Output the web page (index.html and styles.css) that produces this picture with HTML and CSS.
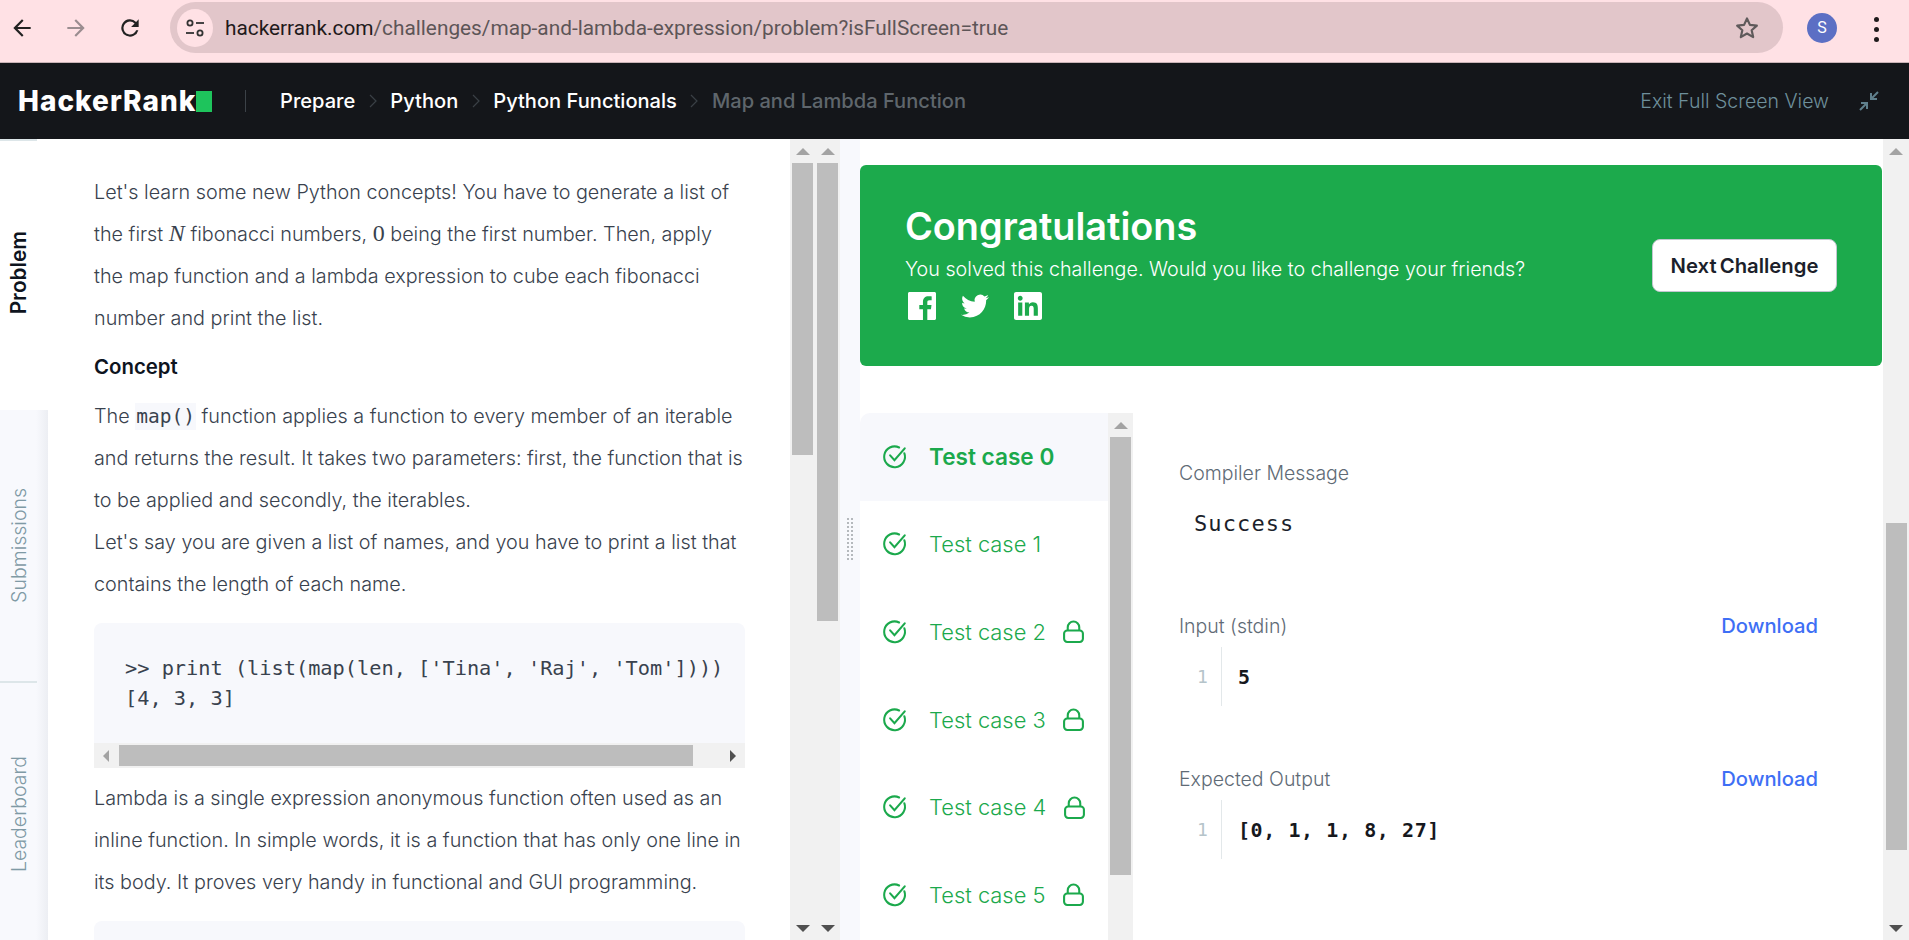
FILE: index.html
```html
<!DOCTYPE html>
<html>
<head>
    <meta charset="utf-8" />
    <title>Map and Lambda Function | HackerRank</title>
    <link rel="stylesheet" href="styles.css">
</head>
<body>
    <div class="browser-bar">
        <div class="nav-btn">
            <svg width="26" height="26" viewBox="0 0 24 24"><path d="M20 11H7.8l5.6-5.6L12 4l-8 8 8 8 1.4-1.4L7.8 13H20z" fill="#222"/></svg>
        </div>
        <div class="nav-btn">
            <svg width="26" height="26" viewBox="0 0 24 24"><path d="M4 11h12.2l-5.6-5.6L12 4l8 8-8 8-1.4-1.4 5.6-5.6H4z" fill="#9b8d90"/></svg>
        </div>
        <div class="nav-btn">
            <svg width="26" height="26" viewBox="0 0 24 24"><path d="M17.65 6.35A8 8 0 1 0 19.73 14h-2.08A6 6 0 1 1 12 6c1.66 0 3.14.69 4.22 1.78L13 11h7V4z" fill="#222"/></svg>
        </div>
        <div class="url-pill">
            <div class="site-info">
                <svg width="24" height="24" viewBox="0 0 24 24" fill="none" stroke="#333" stroke-width="1.8"><circle cx="7" cy="7" r="2.6"/><path d="M13 7h8"/><circle cx="17" cy="17" r="2.6"/><path d="M3 17h8"/></svg>
            </div>
            <div class="url-text"><span class="url-host">hackerrank.com</span>/challenges/map-and-lambda-expression/problem?isFullScreen=true</div>
            <svg class="star" width="26" height="26" viewBox="0 0 24 24" fill="none" stroke="#5f5a5b" stroke-width="2" stroke-linejoin="round"><path d="M12 3.2l2.7 5.9 6.4.7-4.8 4.3 1.4 6.3-5.7-3.3-5.7 3.3 1.4-6.3-4.8-4.3 6.4-.7z"/></svg>
        </div>
        <div class="avatar">S</div>
        <div class="dots"><span></span><span></span><span></span></div>
    </div>

    <div class="hr-header">
        <div class="logo">HackerRank<span class="logo-square"></span></div>
        <div class="logo-line"></div>
        <a class="crumb">Prepare</a>
        <svg class="chev" width="10" height="18" viewBox="0 0 10 18" fill="none" stroke="#3a4046" stroke-width="1.2"><path d="M2 3l6 6-6 6"/></svg>
        <a class="crumb">Python</a>
        <svg class="chev" width="10" height="18" viewBox="0 0 10 18" fill="none" stroke="#3a4046" stroke-width="1.2"><path d="M2 3l6 6-6 6"/></svg>
        <a class="crumb">Python Functionals</a>
        <svg class="chev" width="10" height="18" viewBox="0 0 10 18" fill="none" stroke="#3a4046" stroke-width="1.2"><path d="M2 3l6 6-6 6"/></svg>
        <a class="crumb crumb-last">Map and Lambda Function</a>
        <a class="exit-link">Exit Full Screen View</a>
        <svg class="exit-icon" width="22" height="22" viewBox="0 0 22 22" fill="none" stroke="#5f7f8c" stroke-width="2"><path d="M20 2l-7 7M13 3v6h6M2 20l7-7M3 13h6v6"/></svg>
    </div>

    <div class="workspace">
        <div class="tabs">
            <div class="tab-sep tab-sep-top"></div>
            <div class="tab tab-active"><span>Problem</span></div>
            <div class="tab"><span>Submissions</span></div>
            <div class="tab-sep"></div>
            <div class="tab tab-last"><span>Leaderboard</span></div>
        </div>

        <div class="statement">
            <p>Let's learn some new Python concepts! You have to generate a list of<br>
            the first <i class="math">N</i> fibonacci numbers, <span class="math">0</span> being the first number. Then, apply<br>
            the map function and a lambda expression to cube each fibonacci<br>
            number and print the list.</p>
            <h4>Concept</h4>
            <p>The <code>map()</code> function applies a function to every member of an iterable<br>
            and returns the result. It takes two parameters: first, the function that is<br>
            to be applied and secondly, the iterables.<br>
            Let's say you are given a list of names, and you have to print a list that<br>
            contains the length of each name.</p>
            <div class="code-block">
                <pre>&gt;&gt; print (list(map(len, ['Tina', 'Raj', 'Tom'])))
[4, 3, 3]</pre>
                <div class="hscroll">
                    <span class="arrow-left"></span>
                    <div class="hthumb"></div>
                    <span class="arrow-right"></span>
                </div>
            </div>
            <p>Lambda is a single expression anonymous function often used as an<br>
            inline function. In simple words, it is a function that has only one line in<br>
            its body. It proves very handy in functional and GUI programming.</p>
            <div class="code-block code-next"></div>
        </div>

        <div class="track track-left">
            <span class="arrow-up"></span>
            <div class="thumb thumb-a"></div>
            <span class="arrow-down"></span>
        </div>
        <div class="track track-left">
            <span class="arrow-up"></span>
            <div class="thumb thumb-b"></div>
            <span class="arrow-down"></span>
        </div>

        <div class="divider"><div class="grip"></div></div>

        <div class="result">
            <div class="banner">
                <div class="banner-text">
                    <h2>Congratulations</h2>
                    <div class="banner-sub">You solved this challenge. Would you like to challenge your friends?</div>
                    <div class="social">
                        <svg width="28" height="28" viewBox="0 0 24 24" fill="#fff"><path d="M22.675 0H1.325C.593 0 0 .593 0 1.325v21.351C0 23.407.593 24 1.325 24H12.82v-9.294H9.692v-3.622h3.128V8.413c0-3.1 1.893-4.788 4.659-4.788 1.325 0 2.463.099 2.795.143v3.24l-1.918.001c-1.504 0-1.795.715-1.795 1.763v2.313h3.587l-.467 3.622h-3.12V24h6.116c.73 0 1.323-.593 1.323-1.325V1.325C24 .593 23.407 0 22.675 0z"/></svg>
                        <svg width="28" height="28" viewBox="0 0 24 24" fill="#fff"><path d="M23.953 4.57a10 10 0 01-2.825.775 4.958 4.958 0 002.163-2.723c-.951.555-2.005.959-3.127 1.184a4.92 4.92 0 00-8.384 4.482C7.69 8.095 4.067 6.13 1.64 3.162a4.822 4.822 0 00-.666 2.475c0 1.71.87 3.213 2.188 4.096a4.904 4.904 0 01-2.228-.616v.06a4.923 4.923 0 003.946 4.827 4.996 4.996 0 01-2.212.085 4.936 4.936 0 004.604 3.417 9.867 9.867 0 01-6.102 2.105c-.39 0-.779-.023-1.17-.067a13.995 13.995 0 007.557 2.209c9.053 0 13.998-7.496 13.998-13.985 0-.21 0-.42-.015-.63A9.935 9.935 0 0024 4.59z"/></svg>
                        <svg width="28" height="28" viewBox="0 0 24 24" fill="#fff"><path d="M20.447 20.452h-3.554v-5.569c0-1.328-.027-3.037-1.852-3.037-1.853 0-2.136 1.445-2.136 2.939v5.667H9.351V9h3.414v1.561h.046c.477-.9 1.637-1.85 3.37-1.85 3.601 0 4.267 2.37 4.267 5.455v6.286zM5.337 7.433c-1.144 0-2.063-.926-2.063-2.065 0-1.138.92-2.063 2.063-2.063 1.14 0 2.064.925 2.064 2.063 0 1.139-.925 2.065-2.064 2.065zm1.782 13.019H3.555V9h3.564v11.452zM22.225 0H1.771C.792 0 0 .774 0 1.729v20.542C0 23.227.792 24 1.771 24h20.451C23.2 24 24 23.227 24 22.271V1.729C24 .774 23.2 0 22.222 0h.003z"/></svg>
                    </div>
                </div>
                <a class="next-btn">Next Challenge</a>
            </div>

            <div class="tests">
                <div class="case-list">
                    <div class="case case-active">
                        <svg class="case-check" width="26" height="26" viewBox="0 0 24 24" fill="none" stroke="#1ba94c" stroke-width="1.9" stroke-linecap="round"><path d="M20.6 8.5A9.6 9.6 0 1 1 15.8 3.2"/><path d="M7.5 10.5l4 4.5L21 4"/></svg>
                        <span>Test case 0</span>
                    </div>
                    <div class="case">
                        <svg class="case-check" width="26" height="26" viewBox="0 0 24 24" fill="none" stroke="#1ba94c" stroke-width="1.9" stroke-linecap="round"><path d="M20.6 8.5A9.6 9.6 0 1 1 15.8 3.2"/><path d="M7.5 10.5l4 4.5L21 4"/></svg>
                        <span>Test case 1</span>
                    </div>
                    <div class="case">
                        <svg class="case-check" width="26" height="26" viewBox="0 0 24 24" fill="none" stroke="#1ba94c" stroke-width="1.9" stroke-linecap="round"><path d="M20.6 8.5A9.6 9.6 0 1 1 15.8 3.2"/><path d="M7.5 10.5l4 4.5L21 4"/></svg>
                        <span>Test case 2</span>
                        <svg class="case-lock" width="21" height="23" viewBox="0 0 20 22" fill="none" stroke="#1ba94c" stroke-width="2"><rect x="1" y="10" width="18" height="11" rx="3"/><path d="M4.5 10V7a5.5 5.5 0 0 1 11 0v3"/></svg>
                    </div>
                    <div class="case">
                        <svg class="case-check" width="26" height="26" viewBox="0 0 24 24" fill="none" stroke="#1ba94c" stroke-width="1.9" stroke-linecap="round"><path d="M20.6 8.5A9.6 9.6 0 1 1 15.8 3.2"/><path d="M7.5 10.5l4 4.5L21 4"/></svg>
                        <span>Test case 3</span>
                        <svg class="case-lock" width="21" height="23" viewBox="0 0 20 22" fill="none" stroke="#1ba94c" stroke-width="2"><rect x="1" y="10" width="18" height="11" rx="3"/><path d="M4.5 10V7a5.5 5.5 0 0 1 11 0v3"/></svg>
                    </div>
                    <div class="case">
                        <svg class="case-check" width="26" height="26" viewBox="0 0 24 24" fill="none" stroke="#1ba94c" stroke-width="1.9" stroke-linecap="round"><path d="M20.6 8.5A9.6 9.6 0 1 1 15.8 3.2"/><path d="M7.5 10.5l4 4.5L21 4"/></svg>
                        <span>Test case 4</span>
                        <svg class="case-lock" width="21" height="23" viewBox="0 0 20 22" fill="none" stroke="#1ba94c" stroke-width="2"><rect x="1" y="10" width="18" height="11" rx="3"/><path d="M4.5 10V7a5.5 5.5 0 0 1 11 0v3"/></svg>
                    </div>
                    <div class="case">
                        <svg class="case-check" width="26" height="26" viewBox="0 0 24 24" fill="none" stroke="#1ba94c" stroke-width="1.9" stroke-linecap="round"><path d="M20.6 8.5A9.6 9.6 0 1 1 15.8 3.2"/><path d="M7.5 10.5l4 4.5L21 4"/></svg>
                        <span>Test case 5</span>
                        <svg class="case-lock" width="21" height="23" viewBox="0 0 20 22" fill="none" stroke="#1ba94c" stroke-width="2"><rect x="1" y="10" width="18" height="11" rx="3"/><path d="M4.5 10V7a5.5 5.5 0 0 1 11 0v3"/></svg>
                    </div>
                </div>
                <div class="track track-list">
                    <span class="arrow-up"></span>
                    <div class="thumb thumb-list"></div>
                </div>

                <div class="details">
                    <div class="label">Compiler Message</div>
                    <div class="message">Success</div>

                    <div class="label label-row">Input (stdin) <a class="download">Download</a></div>
                    <div class="io-row">
                        <span class="line-num">1</span>
                        <span class="io-text">5</span>
                    </div>

                    <div class="label label-row label-output">Expected Output <a class="download">Download</a></div>
                    <div class="io-row">
                        <span class="line-num">1</span>
                        <span class="io-text">[0, 1, 1, 8, 27]</span>
                    </div>
                </div>
            </div>
        </div>

        <div class="track track-page">
            <span class="arrow-up"></span>
            <div class="thumb thumb-page"></div>
            <span class="arrow-down"></span>
        </div>
    </div>
</body>
</html>
```

FILE: styles.css
```css
* {
    margin: 0;
    padding: 0;
    box-sizing: border-box;
}

body {
    width: 1909px;
    height: 940px;
    overflow: hidden;
    background: #fff;
    font-family: "Inter", "Liberation Sans", sans-serif;
}

/* browser toolbar */
.browser-bar {
    display: flex;
    align-items: flex-start;
    height: 63px;
    padding-top: 2px;
    background: #ffe1e5;
    border-bottom: 1px solid #c9b3b6;
}

.nav-btn {
    display: flex;
    justify-content: center;
    align-items: center;
    width: 44px;
    height: 51px;
    margin-right: 10px;
}

.url-pill {
    display: flex;
    align-items: center;
    width: 1613px;
    height: 51px;
    margin-left: 8px;
    padding: 0 23px 0 7px;
    border-radius: 26px;
    background: #e2c6ca;
}

.site-info {
    display: flex;
    justify-content: center;
    align-items: center;
    width: 36px;
    height: 38px;
    border-radius: 50%;
    background: #ffe1e5;
}

.url-text {
    flex: 1;
    margin-left: 12px;
    font-family: "Roboto", sans-serif;
    font-size: 20.8px;
    color: #5d5557;
}

.url-host {
    color: #1f1a1b;
}

.avatar {
    width: 30px;
    height: 30px;
    margin: 11px 0 0 24px;
    border-radius: 50%;
    background: #5c6fc4;
    color: #fff;
    font-family: "Roboto", sans-serif;
    font-size: 16px;
    line-height: 30px;
    text-align: center;
}

.dots {
    display: flex;
    flex-direction: column;
    gap: 5px;
    margin: 15px 0 0 37px;
}

.dots span {
    width: 5px;
    height: 5px;
    border-radius: 50%;
    background: #1f1a1b;
}

/* hackerrank header */
.hr-header {
    display: flex;
    align-items: center;
    height: 76px;
    padding: 0 29px 0 18px;
    background: #14161a;
}

.logo {
    display: flex;
    align-items: flex-end;
    width: 195px;
    color: #fff;
    font-size: 28px;
    font-weight: 800;
    letter-spacing: 1px;
    line-height: 26px;
}

.logo-square {
    flex-shrink: 0;
    width: 16px;
    height: 21px;
    margin: 0 0 2px 0;
    background: #1ec45c;
}

.logo-line {
    width: 1px;
    height: 22px;
    margin: 0 34px 0 32px;
    background: #3c4248;
}

.crumb {
    color: #fff;
    font-size: 20.1px;
    font-weight: 500;
}

.crumb-last {
    color: #5f666c;
}

.chev {
    margin: 0 12.5px;
}

.exit-link {
    margin-left: auto;
    color: #6e8f9b;
    font-size: 19.5px;
    font-weight: 300;
}

.exit-icon {
    margin-left: 29px;
}

/* main area */
.workspace {
    display: flex;
    height: 801px;
    overflow: hidden;
}

.tabs {
    display: flex;
    flex-direction: column;
    flex-shrink: 0;
    width: 48px;
    background: linear-gradient(to right, #f8f9fd 75%, #eceef3);
}

.tab {
    display: flex;
    align-items: center;
    flex-shrink: 0;
    height: 271px;
    padding-left: 7px;
    color: #7f9aa5;
    font-size: 19.5px;
    font-weight: 300;
}

.tab span {
    writing-mode: vertical-rl;
    transform: rotate(180deg);
}

.tab-active {
    height: 269px;
    padding-bottom: 5px;
    padding-left: 6px;
    background: #fff;
    color: #0e141e;
    font-size: 20.8px;
    font-weight: 600;
}

.tab-last {
    height: 262px;
}

.tab-sep {
    flex-shrink: 0;
    height: 2px;
    background: linear-gradient(to right, #dde6e9 37px, transparent 37px);
}

.tab-sep-top {
    background: linear-gradient(to right, #dde6e9 37px, #fff 37px);
}

.statement {
    flex-shrink: 0;
    width: 742px;
    padding: 32px 45px 0 46px;
    color: #39424e;
    font-size: 19.8px;
    font-weight: 300;
    line-height: 42px;
}

.statement h4 {
    margin: 7px 0;
    color: #0e141e;
    font-size: 20.4px;
    font-weight: 600;
}

.math {
    font-family: "Liberation Serif", serif;
    font-size: 24px;
    line-height: 1;
}

code {
    padding: 2px 1px;
    background: #f7f8fc;
    font-family: "DejaVu Sans Mono", monospace;
    font-size: 19.5px;
    line-height: 1;
}

.code-block {
    margin: 18px 0 9px;
    border-radius: 8px 8px 0 0;
    background: #f7f8fc;
    overflow: hidden;
}

.code-block pre {
    height: 120px;
    padding: 30px 0 0 31px;
    color: #39424e;
    font-family: "DejaVu Sans Mono", monospace;
    font-size: 20.3px;
    line-height: 30px;
    white-space: pre;
    overflow: hidden;
}

.code-next {
    height: 40px;
}

.hscroll {
    display: flex;
    align-items: center;
    height: 25px;
    background: #f1f1f1;
}

.hthumb {
    width: 574px;
    height: 21px;
    margin: 0 37px 0 10px;
    background: #bdbdbd;
}

.arrow-left {
    width: 0;
    height: 0;
    margin-left: 9px;
    border: 6px solid transparent;
    border-left: 0;
    border-right: 6px solid #a3a3a3;
}

.arrow-right {
    width: 0;
    height: 0;
    border: 6px solid transparent;
    border-right: 0;
    border-left: 6px solid #505050;
}

/* fake scrollbars */
.track {
    display: flex;
    flex-direction: column;
    align-items: center;
    flex-shrink: 0;
    width: 25px;
    background: #f1f1f1;
}

.arrow-up {
    width: 0;
    height: 0;
    margin: 9px 0 8px;
    border: 7px solid transparent;
    border-top: 0;
    border-bottom: 7px solid #a3a3a3;
}

.arrow-down {
    width: 0;
    height: 0;
    margin: auto 0 8px;
    border: 7px solid transparent;
    border-bottom: 0;
    border-top: 7px solid #505050;
}

.thumb {
    width: 21px;
    background: #bdbdbd;
}

.thumb-a {
    height: 292px;
}

.thumb-b {
    height: 458px;
}

.divider {
    display: flex;
    justify-content: center;
    align-items: center;
    flex-shrink: 0;
    width: 20px;
    background: #f8f9fd;
}

.grip {
    width: 8px;
    height: 45px;
    background-image: radial-gradient(#b5b9bd 1.3px, transparent 1.5px);
    background-size: 4px 4px;
}

/* right panel */
.result {
    flex-shrink: 0;
    width: 1023px;
    padding-top: 26px;
    background: #fff;
}

.banner {
    display: flex;
    justify-content: space-between;
    align-items: center;
    width: 1022px;
    height: 201px;
    padding: 0 45px;
    border-radius: 6px;
    background: #1caa4c;
    color: #fff;
}

.banner-text {
    align-self: flex-start;
    padding-top: 39px;
}

.banner h2 {
    font-size: 37.8px;
    font-weight: 600;
    line-height: 44px;
}

.banner-sub {
    margin-top: 7px;
    font-size: 19.7px;
    font-weight: 300;
    line-height: 28px;
}

.social {
    display: flex;
    gap: 25px;
    margin: 9px 0 0 3px;
}

.next-btn {
    width: 185px;
    height: 53px;
    border: 1px solid #c2c7d0;
    border-radius: 8px;
    background: #fff;
    color: #1c1f2b;
    font-size: 20.3px;
    font-weight: 600;
    line-height: 51px;
    text-align: center;
    word-spacing: -2px;
}

.tests {
    display: flex;
    margin-top: 47px;
}

.case-list {
    width: 248px;
    flex-shrink: 0;
}

.case {
    display: flex;
    align-items: center;
    height: 87.6px;
    padding-left: 22px;
    color: #1ba94c;
    font-size: 21.9px;
    font-weight: 300;
}

.case-active {
    border-radius: 10px 0 0 0;
    background: #f7f8fc;
    font-size: 22.6px;
    font-weight: 600;
}

.case-check {
    margin-right: 21px;
}

.case-lock {
    margin-left: 17.5px;
}

.track-list {
    height: 528px;
}

.thumb-list {
    height: 438px;
}

.details {
    width: 639px;
    margin-left: 46px;
    padding-top: 46px;
}

.label {
    color: #5f6b76;
    font-size: 19.5px;
    font-weight: 300;
    line-height: 28px;
}

.label-row {
    display: flex;
    justify-content: space-between;
    margin-bottom: 7px;
}

.label-output {
    margin-top: 59px;
}

.download {
    color: #3e6ff5;
    font-size: 20.2px;
    font-weight: 500;
}

.message {
    margin: 23px 0 74px 15px;
    color: #1c1f2b;
    font-family: "DejaVu Sans Mono", monospace;
    font-size: 22px;
    letter-spacing: 1.1px;
    line-height: 28px;
}

.io-row {
    display: flex;
    align-items: center;
    height: 59px;
}

.line-num {
    width: 43px;
    height: 59px;
    padding-left: 18px;
    border-right: 1px solid #e3e8ea;
    color: #b5c4ca;
    font-family: "DejaVu Sans Mono", monospace;
    font-size: 18px;
    line-height: 59px;
}

.io-text {
    margin-left: 16px;
    color: #16181d;
    font-family: "DejaVu Sans Mono", monospace;
    font-size: 20px;
    font-weight: 700;
    letter-spacing: 0.58px;
}

.track-page {
    width: 26px;
}

.thumb-page {
    height: 327px;
    margin-top: 360px;
}
```
